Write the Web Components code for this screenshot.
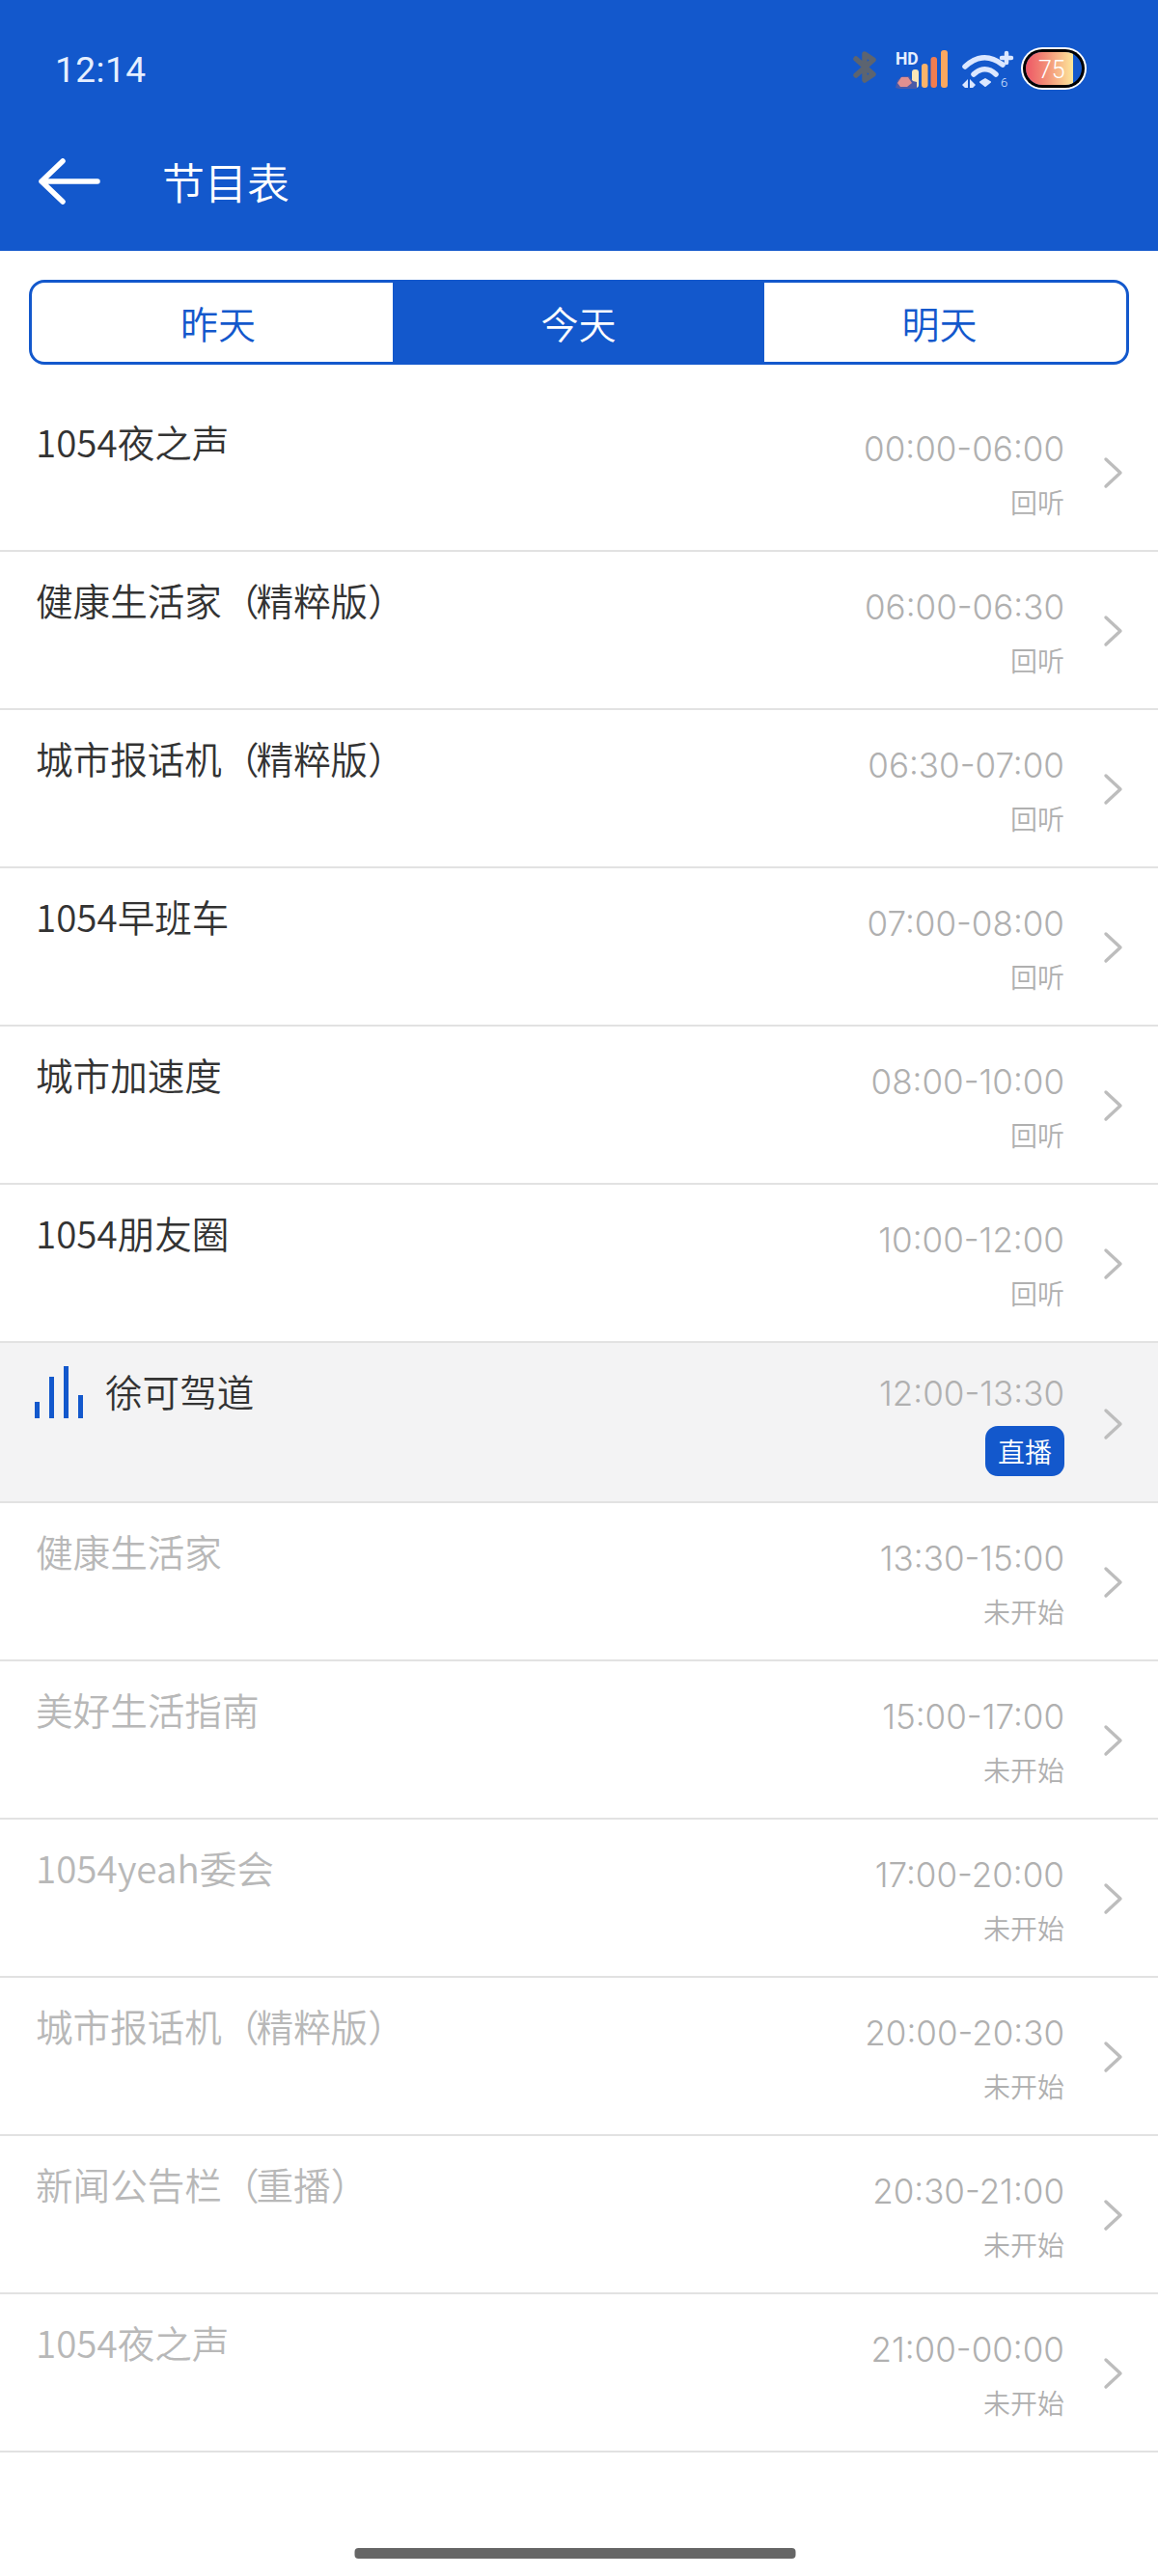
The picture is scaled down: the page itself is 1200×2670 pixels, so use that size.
<!DOCTYPE html>
<html lang="zh">
<head>
<meta charset="utf-8">
<title>节目表</title>
<style>
    html, body { margin: 0; background: #fff; }
    body { font-family: "Noto Sans CJK SC", "Noto Sans", sans-serif; font-weight: 350; width: 1200px; height: 2670px; overflow: hidden; display: flex; flex-direction: column; }
</style>
</head>
<body>
<app-header title="节目表" time="12:14"></app-header>
<day-tabs></day-tabs>
<program-list>
    <program-row name="1054夜之声" time="00:00-06:00" state="回听"></program-row>
    <program-row name="健康生活家（精粹版）" time="06:00-06:30" state="回听"></program-row>
    <program-row name="城市报话机（精粹版）" time="06:30-07:00" state="回听"></program-row>
    <program-row name="1054早班车" time="07:00-08:00" state="回听"></program-row>
    <program-row name="城市加速度" time="08:00-10:00" state="回听"></program-row>
    <program-row name="1054朋友圈" time="10:00-12:00" state="回听"></program-row>
    <program-row name="徐可驾道" time="12:00-13:30" state="直播" live></program-row>
    <program-row name="健康生活家" time="13:30-15:00" state="未开始" upcoming></program-row>
    <program-row name="美好生活指南" time="15:00-17:00" state="未开始" upcoming></program-row>
    <program-row name="1054yeah委会" time="17:00-20:00" state="未开始" upcoming></program-row>
    <program-row name="城市报话机（精粹版）" time="20:00-20:30" state="未开始" upcoming></program-row>
    <program-row name="新闻公告栏（重播）" time="20:30-21:00" state="未开始" upcoming></program-row>
    <program-row name="1054夜之声" time="21:00-00:00" state="未开始" upcoming></program-row>
</program-list>
<home-bar></home-bar>

<script>
class AppHeader extends HTMLElement {
    connectedCallback() {
        this.attachShadow({ mode: 'open' });
        this.shadowRoot.innerHTML = `
            <style>
                :host { display: block; background: #1358cc; height: 260px; color: #fff; flex: none; }
                .status { height: 144px; padding: 0 70px 0 57px; display: flex; align-items: center; justify-content: space-between; box-sizing: border-box; }
                .time { font-family: Roboto, sans-serif; font-weight: 400; font-size: 37px; color: #e6efff; letter-spacing: 0.5px; }
                .icons { display: block; margin-bottom: 4px; }
                .bar { height: 92px; display: flex; align-items: flex-start; padding-left: 40px; }
                .back { width: 64px; height: 52px; margin-top: 18px; }
                .title { font-size: 44px; line-height: 60px; margin: 14px 0 0 64px; }
            </style>
            <div class="status">
                <span class="time">${this.getAttribute('time')}</span>
                <svg class="icons" width="250" height="50" viewBox="0 0 250 50">
                    <!-- bluetooth -->
                    <path d="M7 16 L25 32 L16 38 L16 11 L25 17 L7 33" fill="none" stroke="#5c6470" stroke-width="5.5" stroke-linejoin="round" stroke-linecap="round"/>
                    <!-- HD signal -->
                    <text x="48" y="22" font-family="Roboto, sans-serif" font-size="17.5" font-weight="700" fill="#e6efff">HD</text>
                    <rect x="65" y="27" width="7" height="19" rx="3" fill="#fbe6b8"/>
                    <rect x="75" y="21" width="6.5" height="25" rx="3" fill="#fbb46a"/>
                    <rect x="84.500" y="14" width="6.5" height="32" rx="3" fill="#f27d50"/>
                    <rect x="95" y="7" width="7" height="39" rx="3" fill="#fba860"/>
                    <!-- mascot -->
                    <path d="M48 46 L50 38 L55 34 L62 34 L66 39 L70 40 L70 47 L52 47 Z" fill="#4a5aa8"/>
                    <path d="M50 41 L54 35 L61 35 L65 41 L60 45 L53 45 Z" fill="#e09090"/>
                    <!-- wifi -->
                    <path d="M120 24 C133 12 146 12 159 22" fill="none" stroke="#dbe7ff" stroke-width="5.500" stroke-linecap="round"/>
                    <path d="M129 32 C136 25 145 25 152 32" fill="none" stroke="#dbe7ff" stroke-width="5.500" stroke-linecap="round"/>
                    <path d="M136 40 L141 37 L146 40 L141 44 Z" fill="#dbe7ff" stroke="#dbe7ff" stroke-width="2" stroke-linejoin="round"/>
                    <path d="M158 15 H168 M163 10 V20" stroke="#dbe7ff" stroke-width="4.500" stroke-linecap="round"/>
                    <path d="M117 43 L123 37 V46 H120 Z M125 37 L131 43 L128 46 H125 Z" fill="#dbe7ff"/>
                    <text x="157" y="45" font-family="Roboto, sans-serif" font-size="13" fill="#dbe7ff">6</text>
                    <!-- battery -->
                    <defs>
                        <linearGradient id="batt" x1="0" x2="1" y1="0" y2="0">
                            <stop offset="0" stop-color="#ee5766"/>
                            <stop offset="0.4" stop-color="#f28a75"/>
                            <stop offset="1" stop-color="#fde79a"/>
                        </linearGradient>
                        <clipPath id="cell"><rect x="183" y="9" width="58" height="34" rx="17"/></clipPath>
                    </defs>
                    <rect x="178" y="4" width="68" height="44" rx="22" fill="#fff"/>
                    <rect x="180" y="6" width="64" height="40" rx="20" fill="#000"/>
                    <g clip-path="url(#cell)">
                        <rect x="183" y="9" width="58" height="34" fill="#1358cc"/>
                        <rect x="183" y="9" width="49" height="34" fill="url(#batt)"/>
                    </g>
                    <text x="196" y="36" font-family="Roboto, sans-serif" font-size="25" fill="#fff">75</text>
                </svg>
            </div>
            <div class="bar">
                <svg class="back" viewBox="0 0 64 52"><path d="M25 5 L3 26 L25 47 M3 26 H61" fill="none" stroke="#fff" stroke-width="5.500" stroke-linecap="round" stroke-linejoin="round"/></svg>
                <span class="title">${this.getAttribute('title')}</span>
            </div>
        `;
    }
}

class DayTabs extends HTMLElement {
    connectedCallback() {
        this.attachShadow({ mode: 'open' });
        this.shadowRoot.innerHTML = `
            <style>
                :host { display: flex; flex: none; height: 88px; margin: 30px 30px 30px; box-sizing: border-box; border: 3px solid #1358cc; border-radius: 16px; overflow: hidden; font-size: 39px; color: #1358cc; }
                div { display: flex; align-items: center; justify-content: center; box-sizing: border-box; }
                .a { width: 374px; padding-left: 12px; }
                .b { width: 385px; background: #1358cc; color: #fff; }
                .c { flex: 1; padding-right: 12px; }
            </style>
            <div class="a">昨天</div>
            <div class="b">今天</div>
            <div class="c">明天</div>
        `;
    }
}

class ProgramList extends HTMLElement {
    connectedCallback() {
        this.attachShadow({ mode: 'open' });
        this.shadowRoot.innerHTML = `
            <style>:host { display: block; flex: none; }</style>
            <slot></slot>
        `;
    }
}

class ProgramRow extends HTMLElement {
    connectedCallback() {
        const live = this.hasAttribute('live');
        const name = this.getAttribute('name').replace(/（/g, '<i class="po">（</i>').replace(/）/g, '<i class="pc">）</i>');
        this.attachShadow({ mode: 'open' });
        this.shadowRoot.innerHTML = `
            <style>
                :host { display: flex; height: 164px; box-sizing: border-box; border-bottom: 2px solid #e2e2e2; color: #333; }
                :host([upcoming]) { color: #b8b8b8; }
                :host([live]) { height: 166px; background: #f3f3f4; }
                .left { flex: 1; display: flex; align-items: flex-start; padding: 22px 0 0 37px; }
                .name { font-size: 38.6px; line-height: 54px; white-space: nowrap; }
                .po, .pc { font-style: normal; }
                .po { margin: 0 -3px 0 0; }
                .pc { margin: 0 -3px 0 0; }
                .eq { width: 52px; height: 56px; margin: 0 21px 0 -1px; flex: none; }
                .right { display: flex; flex-direction: column; align-items: flex-end; padding-top: 33px; }
                :host([live]) .right { padding-top: 28px; }
                .time { font-family: Inter, "Noto Sans", sans-serif; font-weight: 300; font-size: 35px; line-height: 48px; color: #b0b0b0; white-space: nowrap; }
                .state { font-size: 28px; line-height: 40px; margin-top: 11px; color: #b0b0b0; }
                .badge { font-size: 28px; line-height: 52px; height: 52px; margin-top: 10px; padding: 0 13px; border-radius: 13px; background: #1358cc; color: #fff; }
                .chev { width: 24px; height: 34px; margin: 65px 35px 0 38px; flex: none; }
                :host([live]) .chev { margin-top: 67px; }
            </style>
            <div class="left">
                ${live ? `<svg class="eq" viewBox="0 0 52 56">
                    <rect x="0" y="39" width="5" height="17" fill="#1358cc"/>
                    <rect x="15" y="13" width="5" height="43" fill="#1358cc"/>
                    <rect x="30" y="2" width="5" height="54" fill="#1358cc"/>
                    <rect x="45" y="32" width="5" height="24" fill="#1358cc"/>
                </svg>` : ''}
                <span class="name">${name}</span>
            </div>
            <div class="right">
                <span class="time">${this.getAttribute('time')}</span>
                <span class="${live ? 'badge' : 'state'}">${this.getAttribute('state')}</span>
            </div>
            <svg class="chev" viewBox="0 0 24 34"><path d="M5 3 L20 17 L5 31" fill="none" stroke="#bdbdbd" stroke-width="3.4" stroke-linecap="round" stroke-linejoin="round"/></svg>
        `;
    }
}

class HomeBar extends HTMLElement {
    connectedCallback() {
        this.attachShadow({ mode: 'open' });
        this.shadowRoot.innerHTML = `
            <style>
                :host { display: flex; justify-content: center; flex: none; padding-top: 99px; transform: translateX(-4.5px); }
                i { display: block; width: 457px; height: 11px; border-radius: 4px; background: #666; }
            </style>
            <i></i>
        `;
    }
}

customElements.define('app-header', AppHeader);
customElements.define('day-tabs', DayTabs);
customElements.define('program-list', ProgramList);
customElements.define('program-row', ProgramRow);
customElements.define('home-bar', HomeBar);
</script>
</body>
</html>
